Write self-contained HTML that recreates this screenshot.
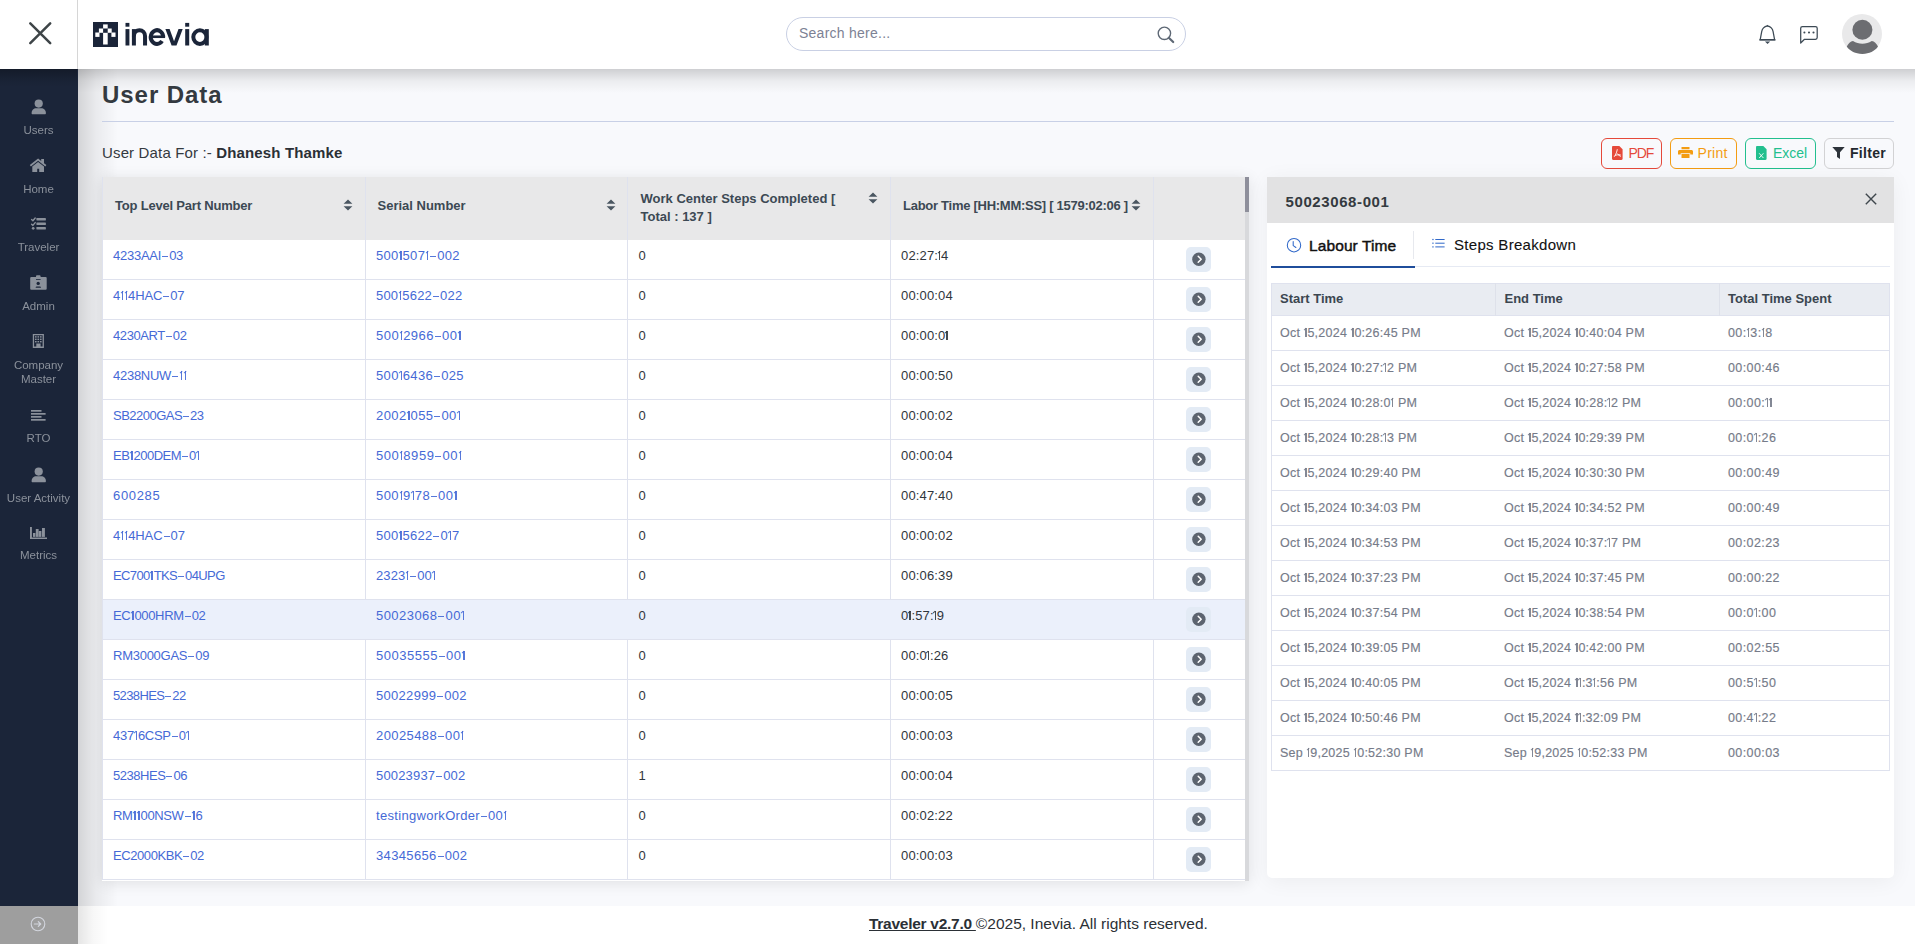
<!DOCTYPE html><html><head><meta charset="utf-8"><title>User Data</title><style>
*{box-sizing:border-box;margin:0;padding:0}
html,body{width:1915px;height:944px;overflow:hidden;background:#fff;font-family:"Liberation Sans", sans-serif}
.a{position:absolute}
.t{position:absolute;white-space:nowrap;line-height:1}
.gs{will-change:transform}
.hy{display:inline-block;position:relative;width:8px;height:1px;font-style:normal}
.hy::before{content:'';position:absolute;left:1px;right:1px;bottom:calc(0.34em - 1px);height:1.15px;background:currentColor;opacity:.9}
.o1{display:inline-block;position:relative;height:0.72em;font-style:normal}
.o1::before{content:'';position:absolute;right:0.9px;bottom:0;width:1.3px;height:0.69em;background:currentColor;opacity:.9}
.o1::after{content:'';position:absolute;right:1.9px;top:calc(0.03em + 0.1px);width:2.6px;height:1.15px;background:currentColor;opacity:.9;transform:rotate(-42deg);transform-origin:100% 0}
</style></head><body>
<div class="a" style="left:78px;top:69px;width:1837px;height:837px;background:#f8f9fc"></div>
<div class="a" style="left:78px;top:69px;width:40px;height:837px;background:linear-gradient(to right,rgba(0,0,0,.15),rgba(0,0,0,.06) 45%,rgba(0,0,0,0))"></div>
<div class="a" style="left:78px;top:69px;width:1837px;height:24px;background:linear-gradient(to bottom,rgba(0,0,0,.17),rgba(0,0,0,.05) 50%,rgba(0,0,0,0))"></div>
<div class="a" style="left:0;top:0;width:1915px;height:69px;background:#fff"></div>
<div class="a" style="left:77px;top:0;width:1px;height:69px;background:#d6d6d6"></div>
<svg class="a" style="left:27px;top:20px" width="27" height="27" viewBox="0 0 27 27"><path d="M3.3 3.3L23.2 23.2M23.2 3.3L3.3 23.2" stroke="#3e4548" stroke-width="2.5" stroke-linecap="round"/></svg>
<div class="a" style="left:93px;top:22px;width:25px;height:25px;background:#1b2539"></div>
<svg class="a" style="left:93px;top:22px" width="25" height="25" viewBox="0 0 25 25"><g fill="#fff"><rect x="10.1" y="2.4" width="4.6" height="4.1"/><rect x="5.9" y="6.5" width="4.2" height="4.3"/><rect x="14.7" y="6.5" width="4" height="4.3"/><rect x="2.3" y="10.5" width="4.2" height="4.4"/><rect x="18.4" y="10.5" width="4.1" height="4.4"/><rect x="10.1" y="10.8" width="4.6" height="11.7"/></g></svg>
<svg class="a" style="left:120px;top:15px" width="95" height="37" viewBox="120 15 95 37"><g fill="#1b2539"><rect x="125.5" y="22.9" width="3.9" height="3.8"/><rect x="125.5" y="29.1" width="3.9" height="16.4"/><rect x="131.9" y="29.1" width="4" height="16.4"/><rect x="185.2" y="22.9" width="4" height="3.8"/><rect x="185.2" y="29.1" width="4" height="16.4"/><rect x="204.8" y="29.1" width="4" height="16.4"/><path d="M165.4 29.1 L169.6 29.1 L174.05 41.3 L178.5 29.1 L182.7 29.1 L176.5 45.5 L171.6 45.5Z"/></g><g fill="none" stroke="#1b2539" stroke-width="4"><path d="M133.9 36.2 A5.57 6 0 0 1 145.05 36.2 V45.5"/><path d="M162.03 41.03 A6.2 6.9 0 1 1 163.15 37.07" stroke-width="4"/><path d="M149.2 36.75 H165.1" stroke-width="2.6"/><ellipse cx="199.9" cy="37.1" rx="6.6" ry="6.8"/></g></svg>
<div class="a" style="left:786px;top:17px;width:400px;height:34px;border:1px solid #c9d0e4;border-radius:17px;background:#fff"></div>
<div class="t" style="left:799px;top:25.6px;font-size:14px;color:#7d8294;letter-spacing:0.25px">Search here...</div>
<svg class="a" style="left:1155px;top:24px" width="22" height="22" viewBox="0 0 22 22"><circle cx="9.4" cy="9.3" r="6.2" fill="none" stroke="#5e6875" stroke-width="1.4"/><path d="M13.8 13.8L18.2 18" stroke="#5e6875" stroke-width="2.2" stroke-linecap="round"/></svg>
<svg class="a" style="left:1752px;top:18px" width="30" height="32" viewBox="1752 18 30 32"><path d="M1760.2 39.6 L1761.7 31.6 C1762.2 28.6 1764.3 26.5 1767.4 25.8 C1770.5 26.5 1772.6 28.6 1773.1 31.6 L1774.6 39.6Z" fill="none" stroke="#3d4a55" stroke-width="1.25" stroke-linejoin="round"/><rect x="1759.3" y="39.2" width="16.2" height="1.4" fill="#3d4a55"/><path d="M1766.3 26.2 L1767.4 24.8 L1768.5 26.2Z" fill="#3d4a55"/><rect x="1765.2" y="40.8" width="4.7" height="1" fill="#a9b0b8"/><path d="M1765.2 41.7 L1769.9 41.7 L1767.55 43.9Z" fill="#3d4a55"/></svg>
<svg class="a" style="left:1796px;top:22px" width="26" height="25" viewBox="1796 22 26 25"><path d="M1800.7 28.2 C1800.7 27.2 1801.4 26.5 1802.4 26.5 L1815.5 26.5 C1816.5 26.5 1817.2 27.2 1817.2 28.2 L1817.2 37.6 C1817.2 38.6 1816.5 39.3 1815.5 39.3 L1804.5 39.3 L1800.7 43 Z" fill="none" stroke="#3d4a55" stroke-width="1.25" stroke-linejoin="round"/><circle cx="1804.4" cy="32.5" r="1.05" fill="#3d4a55"/><circle cx="1809" cy="32.5" r="1.05" fill="#3d4a55"/><circle cx="1813.5" cy="32.5" r="1.05" fill="#3d4a55"/></svg>
<svg class="a" style="left:1838px;top:10px" width="48" height="48" viewBox="1838 10 48 48"><circle cx="1862" cy="34" r="20" fill="#e9e9ea"/><circle cx="1862.4" cy="29.8" r="10" fill="#6c6d71"/><path d="M1846.8 46.6 C1848.3 43.6 1850.5 41.2 1853 41 C1856 42.8 1859 43.7 1862.4 43.7 C1865.8 43.7 1868.8 42.8 1871.8 41 C1874.3 41.2 1876.5 43.6 1878 46.6 C1875 51.2 1869 53.9 1862.4 53.9 C1855.8 53.9 1849.8 51.2 1846.8 46.6Z" fill="#6c6d71"/></svg>
<div class="a" style="left:0;top:69px;width:78px;height:837px;background:#1b2539"></div>
<div class="a" style="left:0;top:906px;width:78px;height:38px;background:#9e9e9e"></div>
<div class="a" style="left:0;top:69px;width:77px;height:18px;background:linear-gradient(to bottom,rgba(0,0,0,.28),rgba(0,0,0,.08) 60%,rgba(0,0,0,0))"></div>
<svg class="a" style="left:27.4px;top:912.8px" width="22" height="22" viewBox="0 0 22 22"><circle cx="11" cy="11" r="6.8" fill="none" stroke="#d3d6de" stroke-width="1.1"/><path d="M7.4 11H13.6M11.3 8.6L13.7 11L11.3 13.4" fill="none" stroke="#d3d6de" stroke-width="1.2" stroke-linecap="round" stroke-linejoin="round"/></svg>
<svg class="a" style="left:31px;top:99px" width="16" height="16" viewBox="0 0 16 16"><circle cx="7.7" cy="4.6" r="4.1" fill="#8b919b"/><path d="M0.6 14.2 C0.6 11 2.8 9.3 5.2 9.3 L10.3 9.3 C12.7 9.3 14.9 11 14.9 14.2 C14.9 14.8 14.5 15.2 13.9 15.2 L1.6 15.2 C1 15.2 0.6 14.8 0.6 14.2Z" fill="#8b919b"/></svg>
<svg class="a" style="left:25px;top:150px" width="27" height="28" viewBox="25 150 27 28"><path d="M38.1 158.5 L29.8 165.1 L30.9 166.5 L38.1 160.8 L45.3 166.5 L46.4 165.1 L44 163.2 L44 158.9 L41.2 158.9 L41.2 161 Z" fill="#8b919b"/><path d="M32.3 166.4 L38.1 161.9 L44 166.4 L44 172 L39.2 172 L39.2 168.8 L37.2 168.8 L37.2 172 L32.3 172 Z" fill="#8b919b"/></svg>
<svg class="a" style="left:30px;top:217px" width="17" height="14" viewBox="0 0 17 14"><path d="M1.6 2.6 L2.9 3.8 L5.2 1 M1.6 7.2 L2.9 8.4 L5.2 5.6" fill="none" stroke="#8b919b" stroke-width="1.4" stroke-linecap="round" stroke-linejoin="round"/><circle cx="3.2" cy="11.3" r="1.35" fill="#8b919b"/><rect x="6.4" y="1" width="9.5" height="2.5" rx="0.4" fill="#8b919b"/><rect x="6.4" y="5.5" width="9.5" height="2.4" rx="0.4" fill="#8b919b"/><rect x="6.4" y="10" width="9.5" height="2.5" rx="0.4" fill="#8b919b"/></svg>
<svg class="a" style="left:30px;top:275px" width="17" height="15" viewBox="0 0 17 15"><path d="M6 3 L6 1.4 C6 0.7 6.5 0.2 7.2 0.2 L9.4 0.2 C10.1 0.2 10.6 0.7 10.6 1.4 L10.6 3Z" fill="#8b919b"/><rect x="0.2" y="2" width="16.5" height="12.8" rx="1.1" fill="#8b919b"/><rect x="6" y="4.1" width="4.6" height="0.8" fill="#1b2539"/><circle cx="8.2" cy="8.4" r="1.65" fill="#1b2539"/><path d="M5.7 12.8 L5.7 12.3 C5.7 11.8 6.1 11.5 6.6 11.5 L10 11.5 C10.5 11.5 10.9 11.8 10.9 12.3 L10.9 12.8Z" fill="#1b2539"/></svg>
<svg class="a" style="left:26px;top:330px" width="26" height="22" viewBox="26 330 26 22"><path d="M32.8 334 H43.9 V347.9 H32.8Z M34.1 335.3 V346.6 H36.3 V343.6 H40.6 V346.6 H42.6 V335.3Z" fill="#8b919b" fill-rule="evenodd"/><g fill="#8b919b"><rect x="35" y="336.2" width="1.6" height="1.4"/><rect x="37.5" y="336.2" width="1.6" height="1.4"/><rect x="40" y="336.2" width="1.6" height="1.4"/><rect x="35" y="338.6" width="1.6" height="1.4"/><rect x="37.5" y="338.6" width="1.6" height="1.4"/><rect x="40" y="338.6" width="1.6" height="1.4"/><rect x="35" y="341" width="1.6" height="1.4"/><rect x="37.5" y="341" width="1.6" height="1.4"/><rect x="40" y="341" width="1.6" height="1.4"/><rect x="37.3" y="344.2" width="2.3" height="2.5"/></g></svg>
<svg class="a" style="left:31px;top:410px" width="15" height="11" viewBox="0 0 15 11"><g fill="#8b919b"><rect x="0" y="0" width="10.5" height="1.7"/><rect x="0" y="3" width="14.6" height="1.7"/><rect x="0" y="6" width="10.5" height="1.7"/><rect x="0" y="9" width="14.6" height="1.7"/></g></svg>
<svg class="a" style="left:31px;top:467px" width="16" height="16" viewBox="0 0 16 16"><circle cx="7.7" cy="4.6" r="4.1" fill="#8b919b"/><path d="M0.6 14.2 C0.6 11 2.8 9.3 5.2 9.3 L10.3 9.3 C12.7 9.3 14.9 11 14.9 14.2 C14.9 14.8 14.5 15.2 13.9 15.2 L1.6 15.2 C1 15.2 0.6 14.8 0.6 14.2Z" fill="#8b919b"/></svg>
<svg class="a" style="left:26px;top:522px" width="26" height="22" viewBox="26 522 26 22"><path d="M30 526.9 L31.9 526.9 L31.9 537.6 L47 537.6 L47 539 L30 539Z" fill="#8b919b"/><g fill="#8b919b"><rect x="33" y="533" width="2.4" height="3.9"/><rect x="35.8" y="529" width="2.8" height="7.9"/><rect x="38.7" y="531" width="2.7" height="5.9"/><rect x="42" y="528" width="2.9" height="8.9"/></g></svg>
<div class="t gs" style="left:0;width:77px;text-align:center;top:124.5px;font-size:11.5px;color:#8b919b">Users</div>
<div class="t gs" style="left:0;width:77px;text-align:center;top:183.7px;font-size:11.5px;color:#8b919b">Home</div>
<div class="t gs" style="left:0;width:77px;text-align:center;top:241.5px;font-size:11.5px;color:#8b919b">Traveler</div>
<div class="t gs" style="left:0;width:77px;text-align:center;top:300.5px;font-size:11.5px;color:#8b919b">Admin</div>
<div class="t gs" style="left:0;width:77px;text-align:center;top:359.9px;font-size:11.5px;color:#8b919b">Company</div>
<div class="t gs" style="left:0;width:77px;text-align:center;top:374.4px;font-size:11.5px;color:#8b919b">Master</div>
<div class="t gs" style="left:0;width:77px;text-align:center;top:433.4px;font-size:11.5px;color:#8b919b">RTO</div>
<div class="t gs" style="left:0;width:77px;text-align:center;top:492.5px;font-size:11.5px;color:#8b919b">User Activity</div>
<div class="t gs" style="left:0;width:77px;text-align:center;top:550.3px;font-size:11.5px;color:#8b919b">Metrics</div>
<div class="t" style="left:102px;top:83px;font-size:24px;font-weight:700;color:#343a40;letter-spacing:0.95px">User Data</div>
<div class="a" style="left:102px;top:121px;width:1792px;height:1px;background:#c8d0e6"></div>
<div class="t" style="left:102px;top:145.3px;font-size:15px;color:#343a40;letter-spacing:0.15px">User Data For :- <b style="color:#2b3036">Dhanesh Thamke</b></div>
<div class="a" style="left:1601px;top:138px;width:61px;height:31px;border:1px solid #e5493a;border-radius:6px"></div>
<svg class="a" style="left:1612px;top:146px" width="11" height="14" viewBox="0 0 11 14"><path d="M1.2 0 L7.3 0 L10.6 3.3 L10.6 12.8 C10.6 13.5 10.1 14 9.4 14 L1.2 14 C0.5 14 0 13.5 0 12.8 L0 1.2 C0 0.5 0.5 0 1.2 0Z" fill="#e5493a"/><path d="M5.3 3.2 C5 5.5 4 8.2 2.2 10.8 M5.3 7.5 C6.3 9 7.5 10 9 10.3 M3 9.3 C4.8 8.8 6.6 8.6 8.6 8.8" fill="none" stroke="#fff" stroke-width="0.9"/></svg>
<div class="t" style="left:1628.5px;top:146.2px;font-size:14px;color:#e5493a;letter-spacing:-1.1px;">PDF</div>
<div class="a" style="left:1670px;top:138px;width:67px;height:31px;border:1px solid #f39c12;border-radius:6px"></div>
<svg class="a" style="left:1678px;top:147px" width="15" height="11" viewBox="0 0 15 11"><path d="M3.5 0 L11.5 0 L11.5 2.2 L3.5 2.2Z M1.5 3 L13.5 3 C14.3 3 15 3.7 15 4.5 L15 7.5 L12.3 7.5 L12.3 6.2 L2.7 6.2 L2.7 7.5 L0 7.5 L0 4.5 C0 3.7 0.7 3 1.5 3Z M3.5 7 L11.5 7 L11.5 11 L3.5 11Z" fill="#f39c12"/></svg>
<div class="t" style="left:1697.5px;top:146.2px;font-size:14px;color:#f39c12;letter-spacing:0.3px;">Print</div>
<div class="a" style="left:1745px;top:138px;width:71px;height:31px;border:1px solid #22bf8e;border-radius:6px"></div>
<svg class="a" style="left:1756px;top:146px" width="11" height="14" viewBox="0 0 11 14"><path d="M1.2 0 L7.3 0 L10.6 3.3 L10.6 12.8 C10.6 13.5 10.1 14 9.4 14 L1.2 14 C0.5 14 0 13.5 0 12.8 L0 1.2 C0 0.5 0.5 0 1.2 0Z" fill="#22bf8e"/><path d="M3.2 7.3 L7.4 12 M7.4 7.3 L3.2 12" stroke="#fff" stroke-width="0.9"/></svg>
<div class="t" style="left:1773px;top:146.2px;font-size:14px;color:#22bf8e;letter-spacing:0px;">Excel</div>
<div class="a" style="left:1824px;top:138px;width:70px;height:31px;border:1px solid #d2d2d4;border-radius:6px"></div>
<svg class="a" style="left:1832px;top:147px" width="13" height="12" viewBox="0 0 13 12"><path d="M0.3 0 L12.7 0 L8 5.3 L8 12 L5 10 L5 5.3Z" fill="#2d333a"/></svg>
<div class="t" style="left:1850px;top:146.2px;font-size:14px;color:#22282e;letter-spacing:0.3px;font-weight:700;">Filter</div>
<div class="a" style="left:102px;top:177px;width:1147px;height:704px;box-shadow:0 2px 14px rgba(0,0,0,.10);background:#fff"></div>
<div class="a" style="left:102px;top:177px;width:1143px;height:63px;background:#e8e8e9"></div>
<div class="a" style="left:365px;top:177px;width:1px;height:703px;background:#dfe2ee"></div>
<div class="a" style="left:627px;top:177px;width:1px;height:703px;background:#dfe2ee"></div>
<div class="a" style="left:890px;top:177px;width:1px;height:703px;background:#dfe2ee"></div>
<div class="a" style="left:1153px;top:177px;width:1px;height:703px;background:#dfe2ee"></div>
<div class="a" style="left:102px;top:177px;width:1px;height:703px;background:#dfe2ee"></div>
<div class="t" style="left:115px;top:199px;font-size:13px;font-weight:700;color:#3c4954;letter-spacing:-0.2px">Top Level Part Number</div>
<div class="t" style="left:377.5px;top:199px;font-size:13px;font-weight:700;color:#3c4954">Serial Number</div>
<div class="t" style="left:640.5px;font-size:13px;font-weight:700;color:#3c4954;line-height:18px;top:189.8px">Work Center Steps Completed [<br>Total : 137 ]</div>
<div class="t" style="left:903px;top:199px;font-size:13px;font-weight:700;color:#3c4954;letter-spacing:-0.27px">Labor Time [HH:MM:SS] [ 1579:02:06 ]</div>
<svg class="a" style="left:342.9px;top:198.6px" width="10" height="12" viewBox="0 0 10 12"><path d="M5 0.4 L9.4 4.8 L0.6 4.8Z M5 11.6 L9.4 7.2 L0.6 7.2Z" fill="#4a5661"/></svg>
<svg class="a" style="left:605.6px;top:198.6px" width="10" height="12" viewBox="0 0 10 12"><path d="M5 0.4 L9.4 4.8 L0.6 4.8Z M5 11.6 L9.4 7.2 L0.6 7.2Z" fill="#4a5661"/></svg>
<svg class="a" style="left:868.2px;top:192px" width="10" height="12" viewBox="0 0 10 12"><path d="M5 0.4 L9.4 4.8 L0.6 4.8Z M5 11.6 L9.4 7.2 L0.6 7.2Z" fill="#4a5661"/></svg>
<svg class="a" style="left:1130.8px;top:198.6px" width="10" height="12" viewBox="0 0 10 12"><path d="M5 0.4 L9.4 4.8 L0.6 4.8Z M5 11.6 L9.4 7.2 L0.6 7.2Z" fill="#4a5661"/></svg>
<div class="a" style="left:102px;top:279px;width:1143px;height:1px;background:#dfe2ee"></div>
<div class="t" style="left:113px;top:249.2px;font-size:13px;color:#4569d6;letter-spacing:-0.25px">4233AAI<i class="hy"></i>03</div>
<div class="t" style="left:376px;top:249.2px;font-size:13px;color:#4569d6;letter-spacing:0.3px">500<i class="o1" style="width:4.00px"></i>507<i class="o1" style="width:4.00px"></i><i class="hy"></i>002</div>
<div class="t" style="left:638.5px;top:249.2px;font-size:13px;color:#30363c">0</div>
<div class="t" style="left:901px;top:249.2px;font-size:13px;color:#30363c;letter-spacing:0.15px">02:27:<i class="o1" style="width:3.00px"></i>4</div>
<div class="a" style="left:1186px;top:247px;width:25px;height:25px;border-radius:5px;background:#e3ebf5"></div>
<svg class="a" style="left:1191px;top:252px" width="15" height="15" viewBox="0 0 15 15"><circle cx="7.9" cy="7.3" r="6.7" fill="#5c646f"/><path d="M7.2 4.3 L10.2 7.3 L7.2 10.3" fill="none" stroke="#fff" stroke-width="1.5" stroke-linecap="round" stroke-linejoin="round"/></svg>
<div class="a" style="left:102px;top:319px;width:1143px;height:1px;background:#dfe2ee"></div>
<div class="t" style="left:113px;top:289.2px;font-size:13px;color:#4569d6;letter-spacing:-0.133px">4<i class="o1" style="width:4.00px"></i><i class="o1" style="width:4.00px"></i>4HAC<i class="hy"></i>07</div>
<div class="t" style="left:376px;top:289.2px;font-size:13px;color:#4569d6;letter-spacing:0.2px">500<i class="o1" style="width:4.00px"></i>5622<i class="hy"></i>022</div>
<div class="t" style="left:638.5px;top:289.2px;font-size:13px;color:#30363c">0</div>
<div class="t" style="left:901px;top:289.2px;font-size:13px;color:#30363c;letter-spacing:0.15px">00:00:04</div>
<div class="a" style="left:1186px;top:287px;width:25px;height:25px;border-radius:5px;background:#e3ebf5"></div>
<svg class="a" style="left:1191px;top:292px" width="15" height="15" viewBox="0 0 15 15"><circle cx="7.9" cy="7.3" r="6.7" fill="#5c646f"/><path d="M7.2 4.3 L10.2 7.3 L7.2 10.3" fill="none" stroke="#fff" stroke-width="1.5" stroke-linecap="round" stroke-linejoin="round"/></svg>
<div class="a" style="left:102px;top:359px;width:1143px;height:1px;background:#dfe2ee"></div>
<div class="t" style="left:113px;top:329.2px;font-size:13px;color:#4569d6;letter-spacing:-0.412px">4230ART<i class="hy"></i>02</div>
<div class="t" style="left:376px;top:329.2px;font-size:13px;color:#4569d6;letter-spacing:0.478px">500<i class="o1" style="width:4.00px"></i>2966<i class="hy"></i>00<i class="o1" style="width:4.00px"></i></div>
<div class="t" style="left:638.5px;top:329.2px;font-size:13px;color:#30363c">0</div>
<div class="t" style="left:901px;top:329.2px;font-size:13px;color:#30363c;letter-spacing:0.15px">00:00:0<i class="o1" style="width:3.00px"></i></div>
<div class="a" style="left:1186px;top:327px;width:25px;height:25px;border-radius:5px;background:#e3ebf5"></div>
<svg class="a" style="left:1191px;top:332px" width="15" height="15" viewBox="0 0 15 15"><circle cx="7.9" cy="7.3" r="6.7" fill="#5c646f"/><path d="M7.2 4.3 L10.2 7.3 L7.2 10.3" fill="none" stroke="#fff" stroke-width="1.5" stroke-linecap="round" stroke-linejoin="round"/></svg>
<div class="a" style="left:102px;top:399px;width:1143px;height:1px;background:#dfe2ee"></div>
<div class="t" style="left:113px;top:369.2px;font-size:13px;color:#4569d6;letter-spacing:-0.271px">4238NUW<i class="hy"></i><i class="o1" style="width:4.00px"></i><i class="o1" style="width:4.00px"></i></div>
<div class="t" style="left:376px;top:369.2px;font-size:13px;color:#4569d6;letter-spacing:0.356px">500<i class="o1" style="width:4.00px"></i>6436<i class="hy"></i>025</div>
<div class="t" style="left:638.5px;top:369.2px;font-size:13px;color:#30363c">0</div>
<div class="t" style="left:901px;top:369.2px;font-size:13px;color:#30363c;letter-spacing:0.15px">00:00:50</div>
<div class="a" style="left:1186px;top:367px;width:25px;height:25px;border-radius:5px;background:#e3ebf5"></div>
<svg class="a" style="left:1191px;top:372px" width="15" height="15" viewBox="0 0 15 15"><circle cx="7.9" cy="7.3" r="6.7" fill="#5c646f"/><path d="M7.2 4.3 L10.2 7.3 L7.2 10.3" fill="none" stroke="#fff" stroke-width="1.5" stroke-linecap="round" stroke-linejoin="round"/></svg>
<div class="a" style="left:102px;top:439px;width:1143px;height:1px;background:#dfe2ee"></div>
<div class="t" style="left:113px;top:409.2px;font-size:13px;color:#4569d6;letter-spacing:-0.52px">SB2200GAS<i class="hy"></i>23</div>
<div class="t" style="left:376px;top:409.2px;font-size:13px;color:#4569d6;letter-spacing:0.4px">2002<i class="o1" style="width:4.00px"></i>055<i class="hy"></i>00<i class="o1" style="width:4.00px"></i></div>
<div class="t" style="left:638.5px;top:409.2px;font-size:13px;color:#30363c">0</div>
<div class="t" style="left:901px;top:409.2px;font-size:13px;color:#30363c;letter-spacing:0.15px">00:00:02</div>
<div class="a" style="left:1186px;top:407px;width:25px;height:25px;border-radius:5px;background:#e3ebf5"></div>
<svg class="a" style="left:1191px;top:412px" width="15" height="15" viewBox="0 0 15 15"><circle cx="7.9" cy="7.3" r="6.7" fill="#5c646f"/><path d="M7.2 4.3 L10.2 7.3 L7.2 10.3" fill="none" stroke="#fff" stroke-width="1.5" stroke-linecap="round" stroke-linejoin="round"/></svg>
<div class="a" style="left:102px;top:479px;width:1143px;height:1px;background:#dfe2ee"></div>
<div class="t" style="left:113px;top:449.2px;font-size:13px;color:#4569d6;letter-spacing:-0.478px">EB<i class="o1" style="width:4.00px"></i>200DEM<i class="hy"></i>0<i class="o1" style="width:4.00px"></i></div>
<div class="t" style="left:376px;top:449.2px;font-size:13px;color:#4569d6;letter-spacing:0.544px">500<i class="o1" style="width:4.00px"></i>8959<i class="hy"></i>00<i class="o1" style="width:4.00px"></i></div>
<div class="t" style="left:638.5px;top:449.2px;font-size:13px;color:#30363c">0</div>
<div class="t" style="left:901px;top:449.2px;font-size:13px;color:#30363c;letter-spacing:0.15px">00:00:04</div>
<div class="a" style="left:1186px;top:447px;width:25px;height:25px;border-radius:5px;background:#e3ebf5"></div>
<svg class="a" style="left:1191px;top:452px" width="15" height="15" viewBox="0 0 15 15"><circle cx="7.9" cy="7.3" r="6.7" fill="#5c646f"/><path d="M7.2 4.3 L10.2 7.3 L7.2 10.3" fill="none" stroke="#fff" stroke-width="1.5" stroke-linecap="round" stroke-linejoin="round"/></svg>
<div class="a" style="left:102px;top:519px;width:1143px;height:1px;background:#dfe2ee"></div>
<div class="t" style="left:113px;top:489.2px;font-size:13px;color:#4569d6;letter-spacing:0.66px">600285</div>
<div class="t" style="left:376px;top:489.2px;font-size:13px;color:#4569d6;letter-spacing:0.45px">500<i class="o1" style="width:4.00px"></i>9<i class="o1" style="width:4.00px"></i>78<i class="hy"></i>00<i class="o1" style="width:4.00px"></i></div>
<div class="t" style="left:638.5px;top:489.2px;font-size:13px;color:#30363c">0</div>
<div class="t" style="left:901px;top:489.2px;font-size:13px;color:#30363c;letter-spacing:0.15px">00:47:40</div>
<div class="a" style="left:1186px;top:487px;width:25px;height:25px;border-radius:5px;background:#e3ebf5"></div>
<svg class="a" style="left:1191px;top:492px" width="15" height="15" viewBox="0 0 15 15"><circle cx="7.9" cy="7.3" r="6.7" fill="#5c646f"/><path d="M7.2 4.3 L10.2 7.3 L7.2 10.3" fill="none" stroke="#fff" stroke-width="1.5" stroke-linecap="round" stroke-linejoin="round"/></svg>
<div class="a" style="left:102px;top:559px;width:1143px;height:1px;background:#dfe2ee"></div>
<div class="t" style="left:113px;top:529.2px;font-size:13px;color:#4569d6;letter-spacing:-0.083px">4<i class="o1" style="width:4.00px"></i><i class="o1" style="width:4.00px"></i>4HAC<i class="hy"></i>07</div>
<div class="t" style="left:376px;top:529.2px;font-size:13px;color:#4569d6;letter-spacing:0.262px">500<i class="o1" style="width:4.00px"></i>5622<i class="hy"></i>0<i class="o1" style="width:4.00px"></i>7</div>
<div class="t" style="left:638.5px;top:529.2px;font-size:13px;color:#30363c">0</div>
<div class="t" style="left:901px;top:529.2px;font-size:13px;color:#30363c;letter-spacing:0.15px">00:00:02</div>
<div class="a" style="left:1186px;top:527px;width:25px;height:25px;border-radius:5px;background:#e3ebf5"></div>
<svg class="a" style="left:1191px;top:532px" width="15" height="15" viewBox="0 0 15 15"><circle cx="7.9" cy="7.3" r="6.7" fill="#5c646f"/><path d="M7.2 4.3 L10.2 7.3 L7.2 10.3" fill="none" stroke="#fff" stroke-width="1.5" stroke-linecap="round" stroke-linejoin="round"/></svg>
<div class="a" style="left:102px;top:599px;width:1143px;height:1px;background:#dfe2ee"></div>
<div class="t" style="left:113px;top:569.2px;font-size:13px;color:#4569d6;letter-spacing:-0.617px">EC700<i class="o1" style="width:4.00px"></i>TKS<i class="hy"></i>04UPG</div>
<div class="t" style="left:376px;top:569.2px;font-size:13px;color:#4569d6;letter-spacing:0.083px">2323<i class="o1" style="width:4.00px"></i><i class="hy"></i>00<i class="o1" style="width:4.00px"></i></div>
<div class="t" style="left:638.5px;top:569.2px;font-size:13px;color:#30363c">0</div>
<div class="t" style="left:901px;top:569.2px;font-size:13px;color:#30363c;letter-spacing:0.15px">00:06:39</div>
<div class="a" style="left:1186px;top:567px;width:25px;height:25px;border-radius:5px;background:#e3ebf5"></div>
<svg class="a" style="left:1191px;top:572px" width="15" height="15" viewBox="0 0 15 15"><circle cx="7.9" cy="7.3" r="6.7" fill="#5c646f"/><path d="M7.2 4.3 L10.2 7.3 L7.2 10.3" fill="none" stroke="#fff" stroke-width="1.5" stroke-linecap="round" stroke-linejoin="round"/></svg>
<div class="a" style="left:103px;top:600px;width:1142px;height:39px;background:#ebf0fb"></div>
<div class="a" style="left:102px;top:639px;width:1143px;height:1px;background:#dfe2ee"></div>
<div class="t" style="left:113px;top:609.2px;font-size:13px;color:#4569d6;letter-spacing:-0.333px">EC<i class="o1" style="width:4.00px"></i>000HRM<i class="hy"></i>02</div>
<div class="t" style="left:376px;top:609.2px;font-size:13px;color:#4569d6;letter-spacing:0.45px">50023068<i class="hy"></i>00<i class="o1" style="width:4.00px"></i></div>
<div class="t" style="left:638.5px;top:609.2px;font-size:13px;color:#30363c">0</div>
<div class="t" style="left:901px;top:609.2px;font-size:13px;color:#30363c;letter-spacing:0.15px">0<i class="o1" style="width:3.00px"></i>:57:<i class="o1" style="width:3.00px"></i>9</div>
<div class="a" style="left:1186px;top:607px;width:25px;height:25px;border-radius:5px;background:#e3ebf5"></div>
<svg class="a" style="left:1191px;top:612px" width="15" height="15" viewBox="0 0 15 15"><circle cx="7.9" cy="7.3" r="6.7" fill="#5c646f"/><path d="M7.2 4.3 L10.2 7.3 L7.2 10.3" fill="none" stroke="#fff" stroke-width="1.5" stroke-linecap="round" stroke-linejoin="round"/></svg>
<div class="a" style="left:102px;top:679px;width:1143px;height:1px;background:#dfe2ee"></div>
<div class="t" style="left:113px;top:649.2px;font-size:13px;color:#4569d6;letter-spacing:-0.26px">RM3000GAS<i class="hy"></i>09</div>
<div class="t" style="left:376px;top:649.2px;font-size:13px;color:#4569d6;letter-spacing:0.52px">50035555<i class="hy"></i>00<i class="o1" style="width:4.00px"></i></div>
<div class="t" style="left:638.5px;top:649.2px;font-size:13px;color:#30363c">0</div>
<div class="t" style="left:901px;top:649.2px;font-size:13px;color:#30363c;letter-spacing:0.15px">00:0<i class="o1" style="width:3.00px"></i>:26</div>
<div class="a" style="left:1186px;top:647px;width:25px;height:25px;border-radius:5px;background:#e3ebf5"></div>
<svg class="a" style="left:1191px;top:652px" width="15" height="15" viewBox="0 0 15 15"><circle cx="7.9" cy="7.3" r="6.7" fill="#5c646f"/><path d="M7.2 4.3 L10.2 7.3 L7.2 10.3" fill="none" stroke="#fff" stroke-width="1.5" stroke-linecap="round" stroke-linejoin="round"/></svg>
<div class="a" style="left:102px;top:719px;width:1143px;height:1px;background:#dfe2ee"></div>
<div class="t" style="left:113px;top:689.2px;font-size:13px;color:#4569d6;letter-spacing:-0.625px">5238HES<i class="hy"></i>22</div>
<div class="t" style="left:376px;top:689.2px;font-size:13px;color:#4569d6;letter-spacing:0.3px">50022999<i class="hy"></i>002</div>
<div class="t" style="left:638.5px;top:689.2px;font-size:13px;color:#30363c">0</div>
<div class="t" style="left:901px;top:689.2px;font-size:13px;color:#30363c;letter-spacing:0.15px">00:00:05</div>
<div class="a" style="left:1186px;top:687px;width:25px;height:25px;border-radius:5px;background:#e3ebf5"></div>
<svg class="a" style="left:1191px;top:692px" width="15" height="15" viewBox="0 0 15 15"><circle cx="7.9" cy="7.3" r="6.7" fill="#5c646f"/><path d="M7.2 4.3 L10.2 7.3 L7.2 10.3" fill="none" stroke="#fff" stroke-width="1.5" stroke-linecap="round" stroke-linejoin="round"/></svg>
<div class="a" style="left:102px;top:759px;width:1143px;height:1px;background:#dfe2ee"></div>
<div class="t" style="left:113px;top:729.2px;font-size:13px;color:#4569d6;letter-spacing:-0.275px">437<i class="o1" style="width:4.00px"></i>6CSP<i class="hy"></i>0<i class="o1" style="width:4.00px"></i></div>
<div class="t" style="left:376px;top:729.2px;font-size:13px;color:#4569d6;letter-spacing:0.4px">20025488<i class="hy"></i>00<i class="o1" style="width:4.00px"></i></div>
<div class="t" style="left:638.5px;top:729.2px;font-size:13px;color:#30363c">0</div>
<div class="t" style="left:901px;top:729.2px;font-size:13px;color:#30363c;letter-spacing:0.15px">00:00:03</div>
<div class="a" style="left:1186px;top:727px;width:25px;height:25px;border-radius:5px;background:#e3ebf5"></div>
<svg class="a" style="left:1191px;top:732px" width="15" height="15" viewBox="0 0 15 15"><circle cx="7.9" cy="7.3" r="6.7" fill="#5c646f"/><path d="M7.2 4.3 L10.2 7.3 L7.2 10.3" fill="none" stroke="#fff" stroke-width="1.5" stroke-linecap="round" stroke-linejoin="round"/></svg>
<div class="a" style="left:102px;top:799px;width:1143px;height:1px;background:#dfe2ee"></div>
<div class="t" style="left:113px;top:769.2px;font-size:13px;color:#4569d6;letter-spacing:-0.463px">5238HES<i class="hy"></i>06</div>
<div class="t" style="left:376px;top:769.2px;font-size:13px;color:#4569d6;letter-spacing:0.17px">50023937<i class="hy"></i>002</div>
<div class="t" style="left:638.5px;top:769.2px;font-size:13px;color:#30363c">1</div>
<div class="t" style="left:901px;top:769.2px;font-size:13px;color:#30363c;letter-spacing:0.15px">00:00:04</div>
<div class="a" style="left:1186px;top:767px;width:25px;height:25px;border-radius:5px;background:#e3ebf5"></div>
<svg class="a" style="left:1191px;top:772px" width="15" height="15" viewBox="0 0 15 15"><circle cx="7.9" cy="7.3" r="6.7" fill="#5c646f"/><path d="M7.2 4.3 L10.2 7.3 L7.2 10.3" fill="none" stroke="#fff" stroke-width="1.5" stroke-linecap="round" stroke-linejoin="round"/></svg>
<div class="a" style="left:102px;top:839px;width:1143px;height:1px;background:#dfe2ee"></div>
<div class="t" style="left:113px;top:809.2px;font-size:13px;color:#4569d6;letter-spacing:-0.357px">RM<i class="o1" style="width:4.00px"></i><i class="o1" style="width:4.00px"></i>00NSW<i class="hy"></i><i class="o1" style="width:4.00px"></i>6</div>
<div class="t" style="left:376px;top:809.2px;font-size:13px;color:#4569d6;letter-spacing:0.311px">testingworkOrder<i class="hy"></i>00<i class="o1" style="width:4.00px"></i></div>
<div class="t" style="left:638.5px;top:809.2px;font-size:13px;color:#30363c">0</div>
<div class="t" style="left:901px;top:809.2px;font-size:13px;color:#30363c;letter-spacing:0.15px">00:02:22</div>
<div class="a" style="left:1186px;top:807px;width:25px;height:25px;border-radius:5px;background:#e3ebf5"></div>
<svg class="a" style="left:1191px;top:812px" width="15" height="15" viewBox="0 0 15 15"><circle cx="7.9" cy="7.3" r="6.7" fill="#5c646f"/><path d="M7.2 4.3 L10.2 7.3 L7.2 10.3" fill="none" stroke="#fff" stroke-width="1.5" stroke-linecap="round" stroke-linejoin="round"/></svg>
<div class="a" style="left:102px;top:879px;width:1143px;height:1px;background:#dfe2ee"></div>
<div class="t" style="left:113px;top:849.2px;font-size:13px;color:#4569d6;letter-spacing:-0.42px">EC2000KBK<i class="hy"></i>02</div>
<div class="t" style="left:376px;top:849.2px;font-size:13px;color:#4569d6;letter-spacing:0.35px">34345656<i class="hy"></i>002</div>
<div class="t" style="left:638.5px;top:849.2px;font-size:13px;color:#30363c">0</div>
<div class="t" style="left:901px;top:849.2px;font-size:13px;color:#30363c;letter-spacing:0.15px">00:00:03</div>
<div class="a" style="left:1186px;top:847px;width:25px;height:25px;border-radius:5px;background:#e3ebf5"></div>
<svg class="a" style="left:1191px;top:852px" width="15" height="15" viewBox="0 0 15 15"><circle cx="7.9" cy="7.3" r="6.7" fill="#5c646f"/><path d="M7.2 4.3 L10.2 7.3 L7.2 10.3" fill="none" stroke="#fff" stroke-width="1.5" stroke-linecap="round" stroke-linejoin="round"/></svg>
<div class="a" style="left:1245px;top:177px;width:4px;height:704px;background:#d8d9dc"></div>
<div class="a" style="left:1245px;top:177px;width:4px;height:35px;background:#8e8f9b"></div>
<div class="a" style="left:1267px;top:177px;width:627px;height:701px;background:#fff;border-radius:0 0 5px 5px;box-shadow:0 3px 22px rgba(0,0,0,.055)"></div>
<div class="a" style="left:1267px;top:177px;width:627px;height:46px;background:#e2e2e3"></div>
<div class="t" style="left:1285.5px;top:194.2px;font-size:15px;font-weight:700;color:#343a40;letter-spacing:0.6px">50023068-001</div>
<svg class="a" style="left:1864px;top:192px" width="14" height="14" viewBox="0 0 14 14"><path d="M1.8 1.8L12.2 12.2M12.2 1.8L1.8 12.2" stroke="#3f474d" stroke-width="1.4"/></svg>
<div class="a" style="left:1271px;top:266px;width:619px;height:1px;background:#e6eaf3"></div>
<div class="a" style="left:1271px;top:265.5px;width:144px;height:2.2px;background:#1f4d9b"></div>
<div class="a" style="left:1413px;top:231px;width:1px;height:28px;background:#e7e9ee"></div>
<svg class="a" style="left:1286px;top:237px" width="16" height="16" viewBox="0 0 16 16"><circle cx="8" cy="8.2" r="6.7" fill="none" stroke="#3068c9" stroke-width="1.05"/><path d="M7.2 4.4 L7.2 8.6 L9.9 10.5" fill="none" stroke="#3068c9" stroke-width="1.05" stroke-linecap="round"/></svg>
<div class="t" style="left:1309px;top:237.8px;font-size:15.5px;color:#111;letter-spacing:0.1px;-webkit-text-stroke:0.45px #111">Labour Time</div>
<svg class="a" style="left:1432px;top:238px" width="14" height="11" viewBox="0 0 14 11"><g fill="#3068c9"><rect x="0.3" y="0.9" width="1.3" height="1.2"/><rect x="0.3" y="4.6" width="1.3" height="1.2"/><rect x="0.3" y="8.3" width="1.3" height="1.2"/><rect x="3.3" y="1" width="9.3" height="1"/><rect x="3.3" y="4.7" width="9.3" height="1"/><rect x="3.3" y="8.4" width="9.3" height="1"/></g></svg>
<div class="t" style="left:1454px;top:237px;font-size:15px;color:#111;letter-spacing:0.3px;-webkit-text-stroke:0.1px #111">Steps Breakdown</div>
<div class="a" style="left:1271px;top:283px;width:619px;height:488px;border:1px solid #dfe2ee"></div>
<div class="a" style="left:1271px;top:283px;width:619px;height:33px;background:#e9ecf2;border:1px solid #dfe2ee"></div>
<div class="a" style="left:1495px;top:283px;width:1px;height:33px;background:#dee1ea"></div>
<div class="a" style="left:1719px;top:283px;width:1px;height:33px;background:#dee1ea"></div>
<div class="t" style="left:1280px;top:292.4px;font-size:13px;font-weight:700;color:#3b4650">Start Time</div>
<div class="t" style="left:1504.5px;top:292.4px;font-size:13px;font-weight:700;color:#3b4650">End Time</div>
<div class="t" style="left:1728px;top:292.4px;font-size:13px;font-weight:700;color:#3b4650">Total Time Spent</div>
<div class="a" style="left:1271px;top:350px;width:619px;height:1px;background:#dfe2ee"></div>
<div class="t" style="left:1280px;top:326.8px;font-size:12.5px;color:#767b89;letter-spacing:0.25px;-webkit-text-stroke:0.15px #767b89">Oct <i class="o1" style="width:3.50px"></i>5,2024 <i class="o1" style="width:3.50px"></i>0:26:45 PM</div>
<div class="t" style="left:1504px;top:326.8px;font-size:12.5px;color:#767b89;letter-spacing:0.25px;-webkit-text-stroke:0.15px #767b89">Oct <i class="o1" style="width:3.50px"></i>5,2024 <i class="o1" style="width:3.50px"></i>0:40:04 PM</div>
<div class="t" style="left:1728px;top:326.8px;font-size:12.5px;color:#767b89;letter-spacing:0.4px;-webkit-text-stroke:0.15px #767b89">00:<i class="o1" style="width:3.75px"></i>3:<i class="o1" style="width:3.75px"></i>8</div>
<div class="a" style="left:1271px;top:385px;width:619px;height:1px;background:#dfe2ee"></div>
<div class="t" style="left:1280px;top:361.8px;font-size:12.5px;color:#767b89;letter-spacing:0.25px;-webkit-text-stroke:0.15px #767b89">Oct <i class="o1" style="width:3.50px"></i>5,2024 <i class="o1" style="width:3.50px"></i>0:27:<i class="o1" style="width:3.50px"></i>2 PM</div>
<div class="t" style="left:1504px;top:361.8px;font-size:12.5px;color:#767b89;letter-spacing:0.25px;-webkit-text-stroke:0.15px #767b89">Oct <i class="o1" style="width:3.50px"></i>5,2024 <i class="o1" style="width:3.50px"></i>0:27:58 PM</div>
<div class="t" style="left:1728px;top:361.8px;font-size:12.5px;color:#767b89;letter-spacing:0.4px;-webkit-text-stroke:0.15px #767b89">00:00:46</div>
<div class="a" style="left:1271px;top:420px;width:619px;height:1px;background:#dfe2ee"></div>
<div class="t" style="left:1280px;top:396.8px;font-size:12.5px;color:#767b89;letter-spacing:0.25px;-webkit-text-stroke:0.15px #767b89">Oct <i class="o1" style="width:3.50px"></i>5,2024 <i class="o1" style="width:3.50px"></i>0:28:0<i class="o1" style="width:3.50px"></i> PM</div>
<div class="t" style="left:1504px;top:396.8px;font-size:12.5px;color:#767b89;letter-spacing:0.25px;-webkit-text-stroke:0.15px #767b89">Oct <i class="o1" style="width:3.50px"></i>5,2024 <i class="o1" style="width:3.50px"></i>0:28:<i class="o1" style="width:3.50px"></i>2 PM</div>
<div class="t" style="left:1728px;top:396.8px;font-size:12.5px;color:#767b89;letter-spacing:0.4px;-webkit-text-stroke:0.15px #767b89">00:00:<i class="o1" style="width:3.75px"></i><i class="o1" style="width:3.75px"></i></div>
<div class="a" style="left:1271px;top:455px;width:619px;height:1px;background:#dfe2ee"></div>
<div class="t" style="left:1280px;top:431.8px;font-size:12.5px;color:#767b89;letter-spacing:0.25px;-webkit-text-stroke:0.15px #767b89">Oct <i class="o1" style="width:3.50px"></i>5,2024 <i class="o1" style="width:3.50px"></i>0:28:<i class="o1" style="width:3.50px"></i>3 PM</div>
<div class="t" style="left:1504px;top:431.8px;font-size:12.5px;color:#767b89;letter-spacing:0.25px;-webkit-text-stroke:0.15px #767b89">Oct <i class="o1" style="width:3.50px"></i>5,2024 <i class="o1" style="width:3.50px"></i>0:29:39 PM</div>
<div class="t" style="left:1728px;top:431.8px;font-size:12.5px;color:#767b89;letter-spacing:0.4px;-webkit-text-stroke:0.15px #767b89">00:0<i class="o1" style="width:3.75px"></i>:26</div>
<div class="a" style="left:1271px;top:490px;width:619px;height:1px;background:#dfe2ee"></div>
<div class="t" style="left:1280px;top:466.8px;font-size:12.5px;color:#767b89;letter-spacing:0.25px;-webkit-text-stroke:0.15px #767b89">Oct <i class="o1" style="width:3.50px"></i>5,2024 <i class="o1" style="width:3.50px"></i>0:29:40 PM</div>
<div class="t" style="left:1504px;top:466.8px;font-size:12.5px;color:#767b89;letter-spacing:0.25px;-webkit-text-stroke:0.15px #767b89">Oct <i class="o1" style="width:3.50px"></i>5,2024 <i class="o1" style="width:3.50px"></i>0:30:30 PM</div>
<div class="t" style="left:1728px;top:466.8px;font-size:12.5px;color:#767b89;letter-spacing:0.4px;-webkit-text-stroke:0.15px #767b89">00:00:49</div>
<div class="a" style="left:1271px;top:525px;width:619px;height:1px;background:#dfe2ee"></div>
<div class="t" style="left:1280px;top:501.8px;font-size:12.5px;color:#767b89;letter-spacing:0.25px;-webkit-text-stroke:0.15px #767b89">Oct <i class="o1" style="width:3.50px"></i>5,2024 <i class="o1" style="width:3.50px"></i>0:34:03 PM</div>
<div class="t" style="left:1504px;top:501.8px;font-size:12.5px;color:#767b89;letter-spacing:0.25px;-webkit-text-stroke:0.15px #767b89">Oct <i class="o1" style="width:3.50px"></i>5,2024 <i class="o1" style="width:3.50px"></i>0:34:52 PM</div>
<div class="t" style="left:1728px;top:501.8px;font-size:12.5px;color:#767b89;letter-spacing:0.4px;-webkit-text-stroke:0.15px #767b89">00:00:49</div>
<div class="a" style="left:1271px;top:560px;width:619px;height:1px;background:#dfe2ee"></div>
<div class="t" style="left:1280px;top:536.8px;font-size:12.5px;color:#767b89;letter-spacing:0.25px;-webkit-text-stroke:0.15px #767b89">Oct <i class="o1" style="width:3.50px"></i>5,2024 <i class="o1" style="width:3.50px"></i>0:34:53 PM</div>
<div class="t" style="left:1504px;top:536.8px;font-size:12.5px;color:#767b89;letter-spacing:0.25px;-webkit-text-stroke:0.15px #767b89">Oct <i class="o1" style="width:3.50px"></i>5,2024 <i class="o1" style="width:3.50px"></i>0:37:<i class="o1" style="width:3.50px"></i>7 PM</div>
<div class="t" style="left:1728px;top:536.8px;font-size:12.5px;color:#767b89;letter-spacing:0.4px;-webkit-text-stroke:0.15px #767b89">00:02:23</div>
<div class="a" style="left:1271px;top:595px;width:619px;height:1px;background:#dfe2ee"></div>
<div class="t" style="left:1280px;top:571.8px;font-size:12.5px;color:#767b89;letter-spacing:0.25px;-webkit-text-stroke:0.15px #767b89">Oct <i class="o1" style="width:3.50px"></i>5,2024 <i class="o1" style="width:3.50px"></i>0:37:23 PM</div>
<div class="t" style="left:1504px;top:571.8px;font-size:12.5px;color:#767b89;letter-spacing:0.25px;-webkit-text-stroke:0.15px #767b89">Oct <i class="o1" style="width:3.50px"></i>5,2024 <i class="o1" style="width:3.50px"></i>0:37:45 PM</div>
<div class="t" style="left:1728px;top:571.8px;font-size:12.5px;color:#767b89;letter-spacing:0.4px;-webkit-text-stroke:0.15px #767b89">00:00:22</div>
<div class="a" style="left:1271px;top:630px;width:619px;height:1px;background:#dfe2ee"></div>
<div class="t" style="left:1280px;top:606.8px;font-size:12.5px;color:#767b89;letter-spacing:0.25px;-webkit-text-stroke:0.15px #767b89">Oct <i class="o1" style="width:3.50px"></i>5,2024 <i class="o1" style="width:3.50px"></i>0:37:54 PM</div>
<div class="t" style="left:1504px;top:606.8px;font-size:12.5px;color:#767b89;letter-spacing:0.25px;-webkit-text-stroke:0.15px #767b89">Oct <i class="o1" style="width:3.50px"></i>5,2024 <i class="o1" style="width:3.50px"></i>0:38:54 PM</div>
<div class="t" style="left:1728px;top:606.8px;font-size:12.5px;color:#767b89;letter-spacing:0.4px;-webkit-text-stroke:0.15px #767b89">00:0<i class="o1" style="width:3.75px"></i>:00</div>
<div class="a" style="left:1271px;top:665px;width:619px;height:1px;background:#dfe2ee"></div>
<div class="t" style="left:1280px;top:641.8px;font-size:12.5px;color:#767b89;letter-spacing:0.25px;-webkit-text-stroke:0.15px #767b89">Oct <i class="o1" style="width:3.50px"></i>5,2024 <i class="o1" style="width:3.50px"></i>0:39:05 PM</div>
<div class="t" style="left:1504px;top:641.8px;font-size:12.5px;color:#767b89;letter-spacing:0.25px;-webkit-text-stroke:0.15px #767b89">Oct <i class="o1" style="width:3.50px"></i>5,2024 <i class="o1" style="width:3.50px"></i>0:42:00 PM</div>
<div class="t" style="left:1728px;top:641.8px;font-size:12.5px;color:#767b89;letter-spacing:0.4px;-webkit-text-stroke:0.15px #767b89">00:02:55</div>
<div class="a" style="left:1271px;top:700px;width:619px;height:1px;background:#dfe2ee"></div>
<div class="t" style="left:1280px;top:676.8px;font-size:12.5px;color:#767b89;letter-spacing:0.25px;-webkit-text-stroke:0.15px #767b89">Oct <i class="o1" style="width:3.50px"></i>5,2024 <i class="o1" style="width:3.50px"></i>0:40:05 PM</div>
<div class="t" style="left:1504px;top:676.8px;font-size:12.5px;color:#767b89;letter-spacing:0.25px;-webkit-text-stroke:0.15px #767b89">Oct <i class="o1" style="width:3.50px"></i>5,2024 <i class="o1" style="width:3.50px"></i><i class="o1" style="width:3.50px"></i>:3<i class="o1" style="width:3.50px"></i>:56 PM</div>
<div class="t" style="left:1728px;top:676.8px;font-size:12.5px;color:#767b89;letter-spacing:0.4px;-webkit-text-stroke:0.15px #767b89">00:5<i class="o1" style="width:3.75px"></i>:50</div>
<div class="a" style="left:1271px;top:735px;width:619px;height:1px;background:#dfe2ee"></div>
<div class="t" style="left:1280px;top:711.8px;font-size:12.5px;color:#767b89;letter-spacing:0.25px;-webkit-text-stroke:0.15px #767b89">Oct <i class="o1" style="width:3.50px"></i>5,2024 <i class="o1" style="width:3.50px"></i>0:50:46 PM</div>
<div class="t" style="left:1504px;top:711.8px;font-size:12.5px;color:#767b89;letter-spacing:0.25px;-webkit-text-stroke:0.15px #767b89">Oct <i class="o1" style="width:3.50px"></i>5,2024 <i class="o1" style="width:3.50px"></i><i class="o1" style="width:3.50px"></i>:32:09 PM</div>
<div class="t" style="left:1728px;top:711.8px;font-size:12.5px;color:#767b89;letter-spacing:0.4px;-webkit-text-stroke:0.15px #767b89">00:4<i class="o1" style="width:3.75px"></i>:22</div>
<div class="a" style="left:1271px;top:770px;width:619px;height:1px;background:#dfe2ee"></div>
<div class="t" style="left:1280px;top:746.8px;font-size:12.5px;color:#767b89;letter-spacing:0.25px;-webkit-text-stroke:0.15px #767b89">Sep <i class="o1" style="width:3.50px"></i>9,2025 <i class="o1" style="width:3.50px"></i>0:52:30 PM</div>
<div class="t" style="left:1504px;top:746.8px;font-size:12.5px;color:#767b89;letter-spacing:0.25px;-webkit-text-stroke:0.15px #767b89">Sep <i class="o1" style="width:3.50px"></i>9,2025 <i class="o1" style="width:3.50px"></i>0:52:33 PM</div>
<div class="t" style="left:1728px;top:746.8px;font-size:12.5px;color:#767b89;letter-spacing:0.4px;-webkit-text-stroke:0.15px #767b89">00:00:03</div>
<div class="a" style="left:78px;top:906px;width:1837px;height:38px;background:#fff"></div>
<div class="a" style="left:78px;top:906px;width:30px;height:38px;background:linear-gradient(to right,rgba(0,0,0,.10),rgba(0,0,0,.03) 50%,rgba(0,0,0,0))"></div>
<div class="t" style="left:869px;top:916.3px;font-size:15.5px;color:#2b3036"><b style="text-decoration:underline;letter-spacing:-0.27px">Traveler v2.7.0 </b>©2025, Inevia. All rights reserved.</div>
</body></html>
